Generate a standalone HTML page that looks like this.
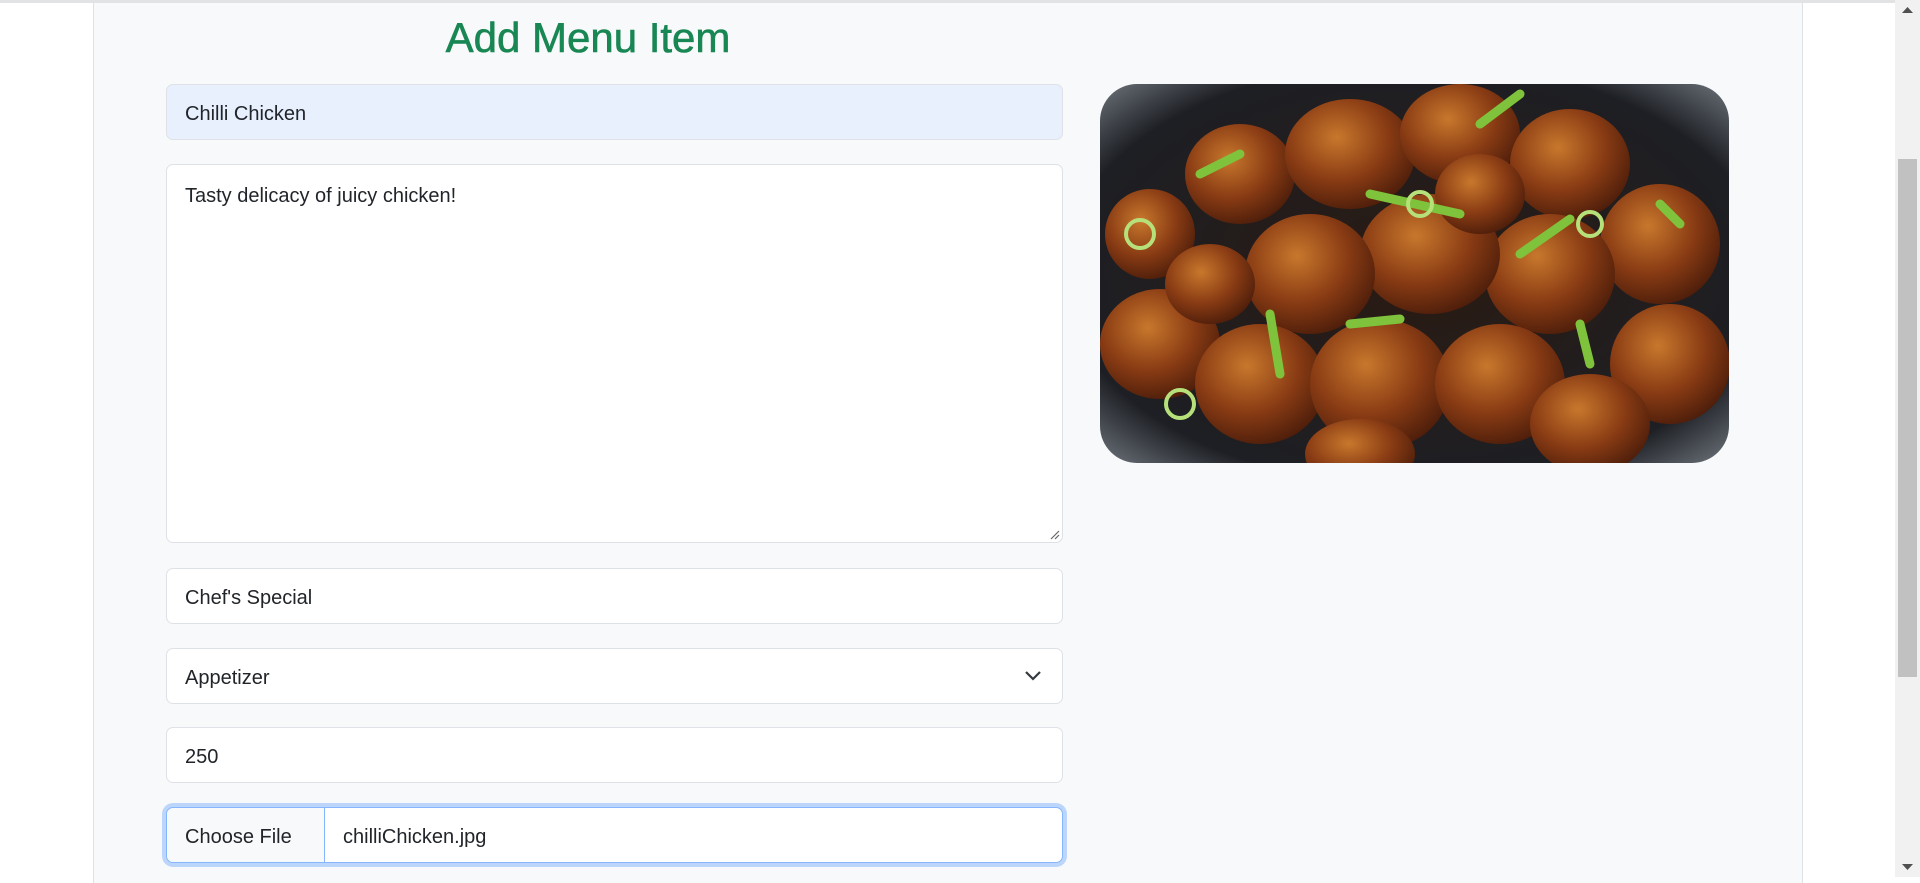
<!DOCTYPE html>
<html><head><meta charset="utf-8"><style>
*{box-sizing:border-box;margin:0;padding:0}
html,body{width:1920px;height:877px;overflow:hidden;background:#fff;font-family:"Liberation Sans",sans-serif;color:#212529}
.topline{position:absolute;left:0;top:0;width:1895px;height:3px;background:#e2e3e5}
.cont{position:absolute;left:93px;top:3px;width:1710px;height:880px;background:#f8f9fa;border-left:1px solid #dee2e6;border-right:1px solid #dee2e6}
h2{position:absolute;left:288px;width:600px;top:13px;text-align:center;color:#198754;font-size:42px;font-weight:normal;line-height:50px;-webkit-text-stroke:0.6px #198754}
.f{position:absolute;left:166px;width:897px;height:56px;background:#fff;border:1px solid #dee2e6;border-radius:7px;font-size:20px;padding-left:18px;line-height:58px}
.sb{position:absolute;left:1895px;top:0;width:25px;height:877px;background:#f1f1f1}
.th{position:absolute;left:3px;top:159px;width:19px;height:518px;background:#c1c1c1}
</style></head><body>
<div class="topline"></div>
<div class="cont"></div>
<h2>Add Menu Item</h2>
<div class="f" style="top:84px;background:#e8f0fe">Chilli Chicken</div>
<div class="f" style="top:164px;height:379px;line-height:26px;padding-top:18px">Tasty delicacy of juicy chicken!
<svg style="position:absolute;right:2px;bottom:2px" width="12" height="12"><path d="M11 3L3 11M11 7L7 11" stroke="#666" stroke-width="1.2"/></svg></div>
<div class="f" style="top:568px">Chef's Special</div>
<div class="f" style="top:648px">Appetizer
<svg style="position:absolute;right:20px;top:20px" width="18" height="14"><path d="M2 3l7 7 7-7" stroke="#343a40" stroke-width="2.2" fill="none"/></svg></div>
<div class="f" style="top:727px">250</div>
<div class="f" style="top:807px;height:56px;border:1px solid #86b7fe;box-shadow:0 0 0 4px #bcd6fb;padding-left:0">
<span style="display:inline-block;width:158px;height:54px;background:#f8f9fa;border-right:1px solid #86b7fe;padding-left:18px;border-radius:7px 0 0 7px">Choose File</span><span style="padding-left:18px">chilliChicken.jpg</span></div>
<div style="position:absolute;left:1100px;top:84px;width:629px;height:379px;border-radius:37px;overflow:hidden">
<svg width="629" height="379" viewBox="0 0 629 379">
<defs><radialGradient id="bg" cx="0.5" cy="0.5" r="0.7"><stop offset="0" stop-color="#2a1a12"/><stop offset="0.8" stop-color="#1d1f24"/><stop offset="1" stop-color="#6a7078"/></radialGradient>
<radialGradient id="ch" cx="0.4" cy="0.35" r="0.7"><stop offset="0" stop-color="#c8782c"/><stop offset="0.55" stop-color="#8a3c14"/><stop offset="1" stop-color="#4a1c0a"/></radialGradient></defs>
<rect width="629" height="379" fill="url(#bg)"/>
<g fill="url(#ch)">
<ellipse cx="50" cy="150" rx="45" ry="45"/><ellipse cx="60" cy="260" rx="60" ry="55"/><ellipse cx="140" cy="90" rx="55" ry="50"/>
<ellipse cx="250" cy="70" rx="65" ry="55"/><ellipse cx="360" cy="50" rx="60" ry="50"/><ellipse cx="470" cy="80" rx="60" ry="55"/>
<ellipse cx="560" cy="160" rx="60" ry="60"/><ellipse cx="570" cy="280" rx="60" ry="60"/><ellipse cx="450" cy="190" rx="65" ry="60"/>
<ellipse cx="330" cy="170" rx="70" ry="60"/><ellipse cx="210" cy="190" rx="65" ry="60"/><ellipse cx="160" cy="300" rx="65" ry="60"/>
<ellipse cx="280" cy="300" rx="70" ry="65"/><ellipse cx="400" cy="300" rx="65" ry="60"/><ellipse cx="490" cy="340" rx="60" ry="50"/>
<ellipse cx="260" cy="370" rx="55" ry="35"/><ellipse cx="110" cy="200" rx="45" ry="40"/><ellipse cx="380" cy="110" rx="45" ry="40"/>
</g>
<g stroke="#7fc23c" stroke-width="9" stroke-linecap="round" fill="none">
<path d="M270 110l90 20"/><path d="M420 170l50-35"/><path d="M250 240l50-5"/><path d="M100 90l40-20"/>
<path d="M380 40l40-30"/><path d="M480 240l10 40"/><path d="M170 230l10 60"/><path d="M560 120l20 20"/>
</g>
<g fill="none" stroke="#b6e07a" stroke-width="4"><circle cx="40" cy="150" r="14"/><circle cx="80" cy="320" r="14"/><circle cx="320" cy="120" r="12"/><circle cx="490" cy="140" r="12"/></g>
</svg></div>
<div class="sb"><div class="th"></div>
<svg style="position:absolute;left:7px;top:6px" width="11" height="8"><path d="M0 7L5.5 1 11 7z" fill="#505050"/></svg>
<svg style="position:absolute;left:7px;top:863px" width="11" height="8"><path d="M0 1L5.5 7 11 1z" fill="#505050"/></svg></div>
</body></html>
